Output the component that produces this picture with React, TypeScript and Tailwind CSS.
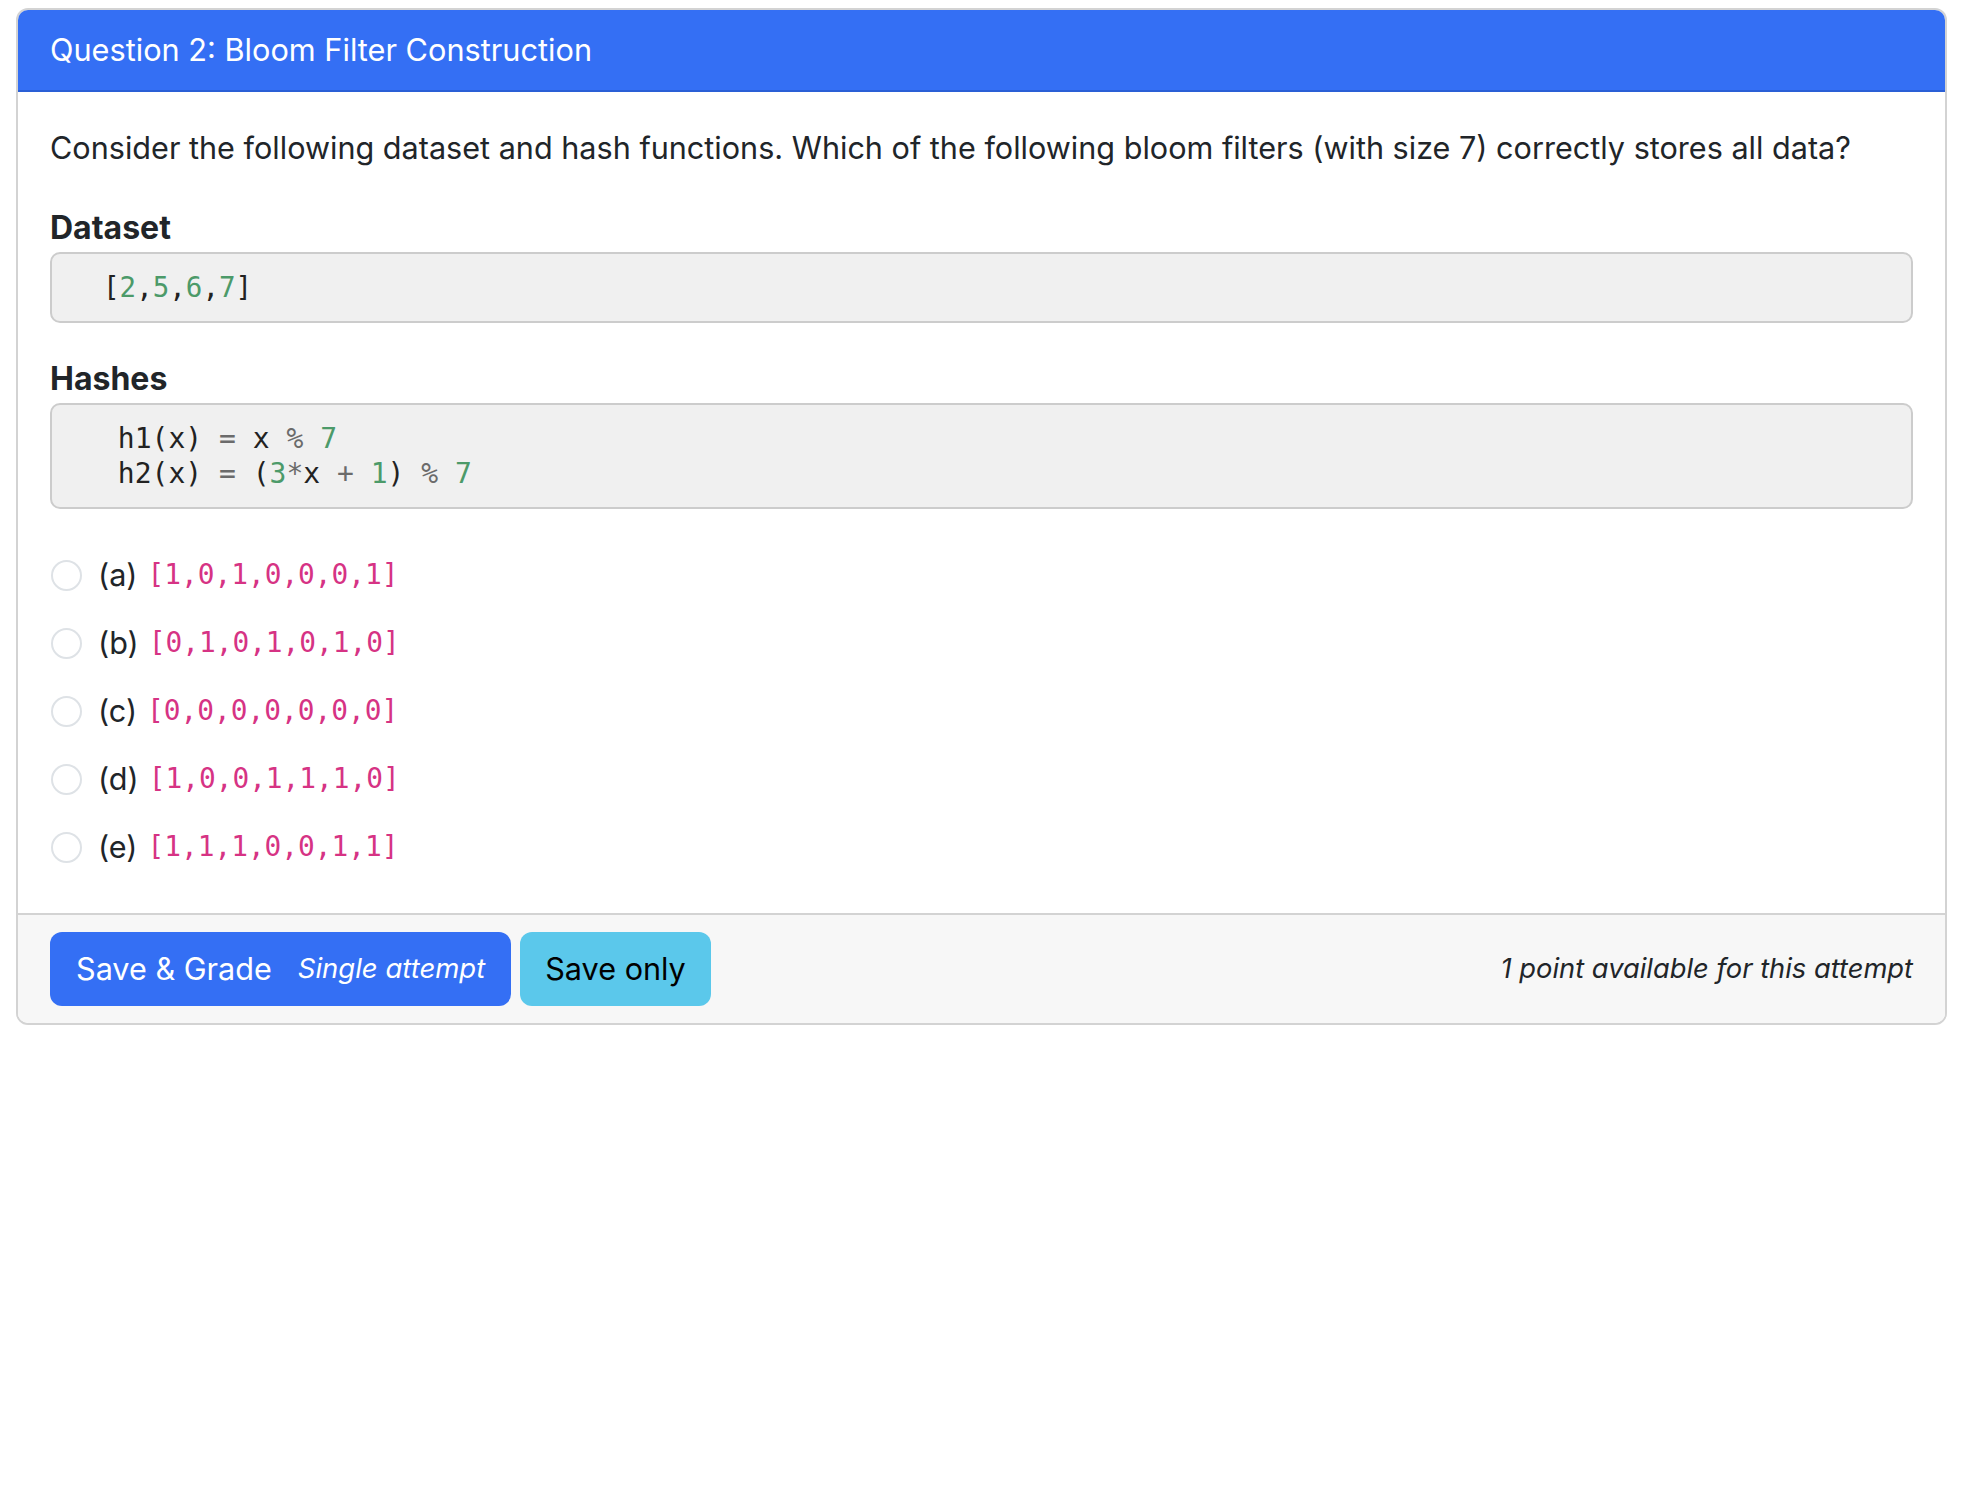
const sans = "font-['Inter','Liberation_Sans',sans-serif]";
const mono = "font-['DejaVu_Sans_Mono','Liberation_Mono',monospace]";

const options = [
  { label: "(a)", value: "[1,0,1,0,0,0,1]" },
  { label: "(b)", value: "[0,1,0,1,0,1,0]" },
  { label: "(c)", value: "[0,0,0,0,0,0,0]" },
  { label: "(d)", value: "[1,0,0,1,1,1,0]" },
  { label: "(e)", value: "[1,1,1,0,0,1,1]" },
];

function Num({ children }: { children: React.ReactNode }) {
  return <span className="text-[#4c9a69]">{children}</span>;
}

function Op({ children }: { children: React.ReactNode }) {
  return <span className="text-[#6b6b6b]">{children}</span>;
}

export default function App() {
  return (
    <div className={`${sans} min-h-[1486px] bg-white pt-2 pl-4 text-[#212529]`}>
      <div className="w-[1931px] overflow-hidden rounded-xl border-2 border-[#d3d3d3]">
        <div className="border-b-2 border-[#2a5fd6] bg-[#346ff4] px-8 py-4 text-[30.7px] leading-[48px] text-white">
          Question 2: Bloom Filter Construction
        </div>

        <div className="px-8 pt-8 pb-8">
          <p className="mb-8 text-[30.6px] leading-[48px]">
            Consider the following dataset and hash functions. Which of the following bloom filters (with size 7) correctly stores all data?
          </p>

          <h3 className="text-[32px] font-bold leading-[48px]">Dataset</h3>
          <pre className={`${mono} mb-8 rounded-[10px] border-2 border-[#cccccc] bg-[#f0f0f0] py-[16px] pl-[51px] text-[27.5px] leading-[35px] text-[#222]`}>
            [<Num>2</Num>,<Num>5</Num>,<Num>6</Num>,<Num>7</Num>]
          </pre>

          <h3 className="text-[32px] font-bold leading-[48px]">Hashes</h3>
          <pre className={`${mono} mb-8 rounded-[10px] border-2 border-[#cccccc] bg-[#f0f0f0] py-[16px] pl-[49px] text-[28px] leading-[35px] text-[#222]`}>
            {" h1(x) "}<Op>=</Op>{" x "}<Op>%</Op> <Num>7</Num>
            {"\n h2(x) "}<Op>=</Op>{" ("}<Num>3</Num><Op>*</Op>{"x "}<Op>+</Op> <Num>1</Num>{") "}<Op>%</Op> <Num>7</Num>
          </pre>

          <div className="flex flex-col">
            {options.map((o) => (
              <label key={o.label} className="flex h-[68px] items-center">
                <span className="ml-[1px] h-[31px] w-[31px] shrink-0 rounded-full border-2 border-[#dee2e6] bg-white" />
                <span className="ml-[16px] text-[30.6px]">{o.label}</span>
                <code className={`${mono} ml-[10px] text-[27.8px] text-[#d63384]`}>{o.value}</code>
              </label>
            ))}
          </div>
        </div>

        <div className="flex items-center border-t-2 border-[#d3d3d3] bg-[#f7f7f7] px-8 py-[17px]">
          <button className="flex h-[74px] items-center gap-[26px] rounded-xl bg-[#346ff4] px-[26px] text-white">
            <span className="text-[30.6px]">Save &amp; Grade</span>
            <span className="text-[27.5px] italic">Single attempt</span>
          </button>
          <button className="ml-[9px] flex h-[74px] items-center rounded-xl bg-[#5bc8eb] px-[25px] text-[30.6px] text-black">
            Save only
          </button>
          <div className="ml-auto text-[27.3px] italic">1 point available for this attempt</div>
        </div>
      </div>
    </div>
  );
}
